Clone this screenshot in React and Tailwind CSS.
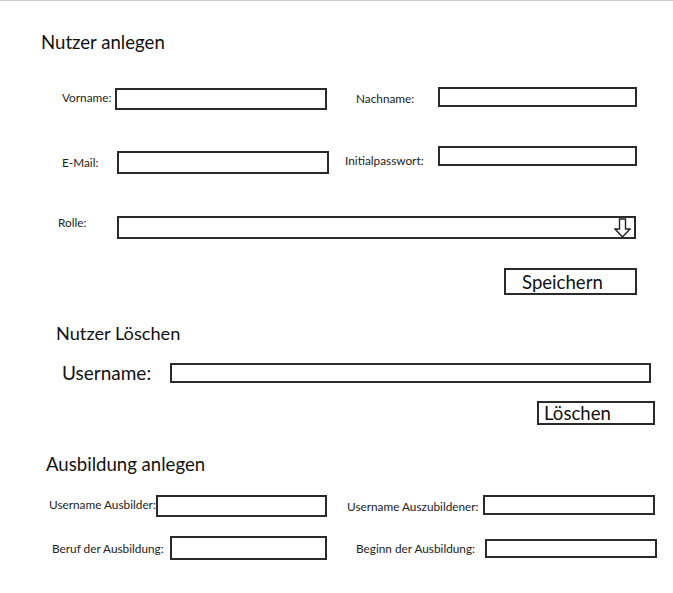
import React from 'react';

const Box = ({ className }) => (
  <div className={'shrink-0 border-2 border-[#2a2a2a] bg-white ' + className} />
);

const Label = ({ className, children }) => (
  <div className={'shrink-0 whitespace-nowrap text-[11.8px] leading-[20px] text-[#222] ' + className}>{children}</div>
);

const DownArrow = () => (
  <svg width="17" height="20" viewBox="0 0 17 20" className="absolute right-[3px] top-[0px]">
    <path d="M5.5 1 H11.5 V11 H16 L8.5 19 L1 11 H5.5 Z" fill="white" stroke="#222" strokeWidth="1.4" strokeLinejoin="miter" />
  </svg>
);

const App = () => {
  return (
    <div className="w-[673px] h-[593px] bg-white border-t border-[#cfcfcf] font-['Lato',sans-serif] text-[#111] overflow-hidden">
      {/* Nutzer anlegen */}
      <h1 className="pt-[30px] pl-[41px] text-[18.6px] leading-[22px]">Nutzer anlegen</h1>

      <div className="mt-[34px] flex items-start">
        <Label className="ml-[62px] w-[53px] mt-[1px]">Vorname:</Label>
        <Box className="w-[212px] h-[22px] mt-[1px]" />
        <Label className="ml-[29px] w-[82px] mt-[2px]">Nachname:</Label>
        <Box className="w-[199px] h-[20px]" />
      </div>

      <div className="mt-[36px] flex items-start">
        <Label className="ml-[62px] w-[55px] mt-[7px]">E-Mail:</Label>
        <Box className="w-[212px] h-[23px] mt-[5px]" />
        <Label className="ml-[16px] w-[93px] mt-[5px]">Initialpasswort:</Label>
        <Box className="w-[199px] h-[20px]" />
      </div>

      <div className="mt-[42px] flex items-start">
        <Label className="ml-[58px] w-[59px] -mt-[3px]">Rolle:</Label>
        <div className="relative shrink-0 w-[519px] h-[23px] border-2 border-[#2a2a2a] bg-white">
          <DownArrow />
        </div>
      </div>

      <div className="mt-[29px] flex">
        <button className="ml-[504px] w-[133px] h-[27px] border-2 border-[#2a2a2a] bg-white pl-[16px] text-left text-[18.6px] leading-[20px]">
          Speichern
        </button>
      </div>

      {/* Nutzer Löschen */}
      <h2 className="mt-[28px] pl-[56px] text-[18.2px] leading-[20px]">Nutzer Löschen</h2>

      <div className="mt-[20px] flex items-start">
        <div className="ml-[62px] w-[108px] shrink-0 text-[19px] leading-[20px]">Username:</div>
        <Box className="w-[481px] h-[20px]" />
      </div>

      <div className="mt-[18px] flex">
        <button className="ml-[537px] w-[118px] h-[24px] border-2 border-[#2a2a2a] bg-white pl-[5px] text-left text-[18.6px] leading-[19px]">
          Löschen
        </button>
      </div>

      {/* Ausbildung anlegen */}
      <h2 className="mt-[28px] pl-[46px] text-[18.6px] leading-[22px]">Ausbildung anlegen</h2>

      <div className="mt-[20px] flex items-start">
        <Label className="ml-[49px] w-[107px]">Username Ausbilder:</Label>
        <Box className="w-[171px] h-[22px]" />
        <Label className="ml-[20px] w-[136px] mt-[2px]">Username Auszubildener:</Label>
        <Box className="w-[172px] h-[20px]" />
      </div>

      <div className="mt-[19px] flex items-start">
        <Label className="ml-[52px] w-[118px] mt-[3px]">Beruf der Ausbildung:</Label>
        <Box className="w-[157px] h-[24px]" />
        <Label className="ml-[29px] w-[129px] mt-[3px]">Beginn der Ausbildung:</Label>
        <Box className="w-[172px] h-[19px] mt-[3px]" />
      </div>
    </div>
  );
};

export default App;
